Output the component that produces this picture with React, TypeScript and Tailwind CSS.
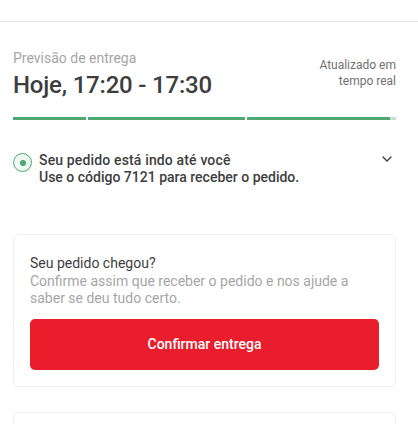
import React from "react";

export default function App() {
  return (
    <div className="w-[418px] h-[424px] bg-white overflow-hidden" style={{ fontFamily: "Roboto, 'Noto Sans', sans-serif" }}>
      <div className="h-[21px]" />
      <div className="h-px bg-[#e6e6e6]" />
      <div className="pl-[13px] pr-[22px]">
        <div className="flex items-center justify-between pt-[26px]">
          <div className="flex flex-col">
            <span className="text-[14px] leading-[20px] text-[#a6a6a6]">Previsão de entrega</span>
            <span className="text-[24px] leading-[32px] font-medium text-[#3e3e3e] mt-[1px] tracking-[-0.2px]">Hoje, 17:20 - 17:30</span>
          </div>
          <div className="text-right text-[12px] leading-[16px] text-[#717171] mt-[-4px]">
            Atualizado em
            <br />
            tempo real
          </div>
        </div>
        <div className="flex gap-[2px] mt-[16px] h-[3px]">
          <div className="w-[73px] bg-[#50a773]" />
          <div className="w-[157px] bg-[#50a773]" />
          <div className="flex-1 flex">
            <div className="flex-1 bg-[#50a773]" />
            <div className="w-[6px] bg-[#c8dccf]" />
          </div>
        </div>
        <div className="flex items-start mt-[32px]">
          <div className="w-[19px] h-[19px] rounded-full border-[1.5px] border-[#50a773] bg-[#eef7f1] flex items-center justify-center mt-[1px] shrink-0">
            <div className="w-[6px] h-[6px] rounded-full bg-[#50a773]" />
          </div>
          <div className="ml-[7px] flex-1 text-[14px] leading-[17px] font-medium text-[#3e3e3e]">
            <div className="tracking-[0.15px]">Seu pedido está indo até você</div>
            <div>Use o código 7121 para receber o pedido.</div>
          </div>
          <svg className="mt-[4px] mr-[4px]" width="10" height="6" viewBox="0 0 10 6" fill="none">
            <path d="M1 1l4 4 4-4" stroke="#3e3e3e" strokeWidth="1.4" strokeLinecap="round" strokeLinejoin="round" />
          </svg>
        </div>
        <div className="mt-[48px] border border-[#efefef] rounded-[6px] px-[16px] pt-[18px] pb-[16px] w-[383px]">
          <div className="text-[14px] leading-[20px] text-[#3e3e3e]">Seu pedido chegou?</div>
          <div className="text-[14px] leading-[17px] text-[#a6a6a6]">
            Confirme assim que receber o pedido e nos ajude a saber se deu tudo certo.
          </div>
          <button className="mt-[12px] w-full h-[51px] rounded-[5px] bg-[#ea1d2c] text-white text-[14px] font-medium">
            Confirmar entrega
          </button>
        </div>
        <div className="mt-[25px] border border-[#efefef] rounded-[6px] h-[40px] w-[383px]" />
      </div>
    </div>
  );
}
